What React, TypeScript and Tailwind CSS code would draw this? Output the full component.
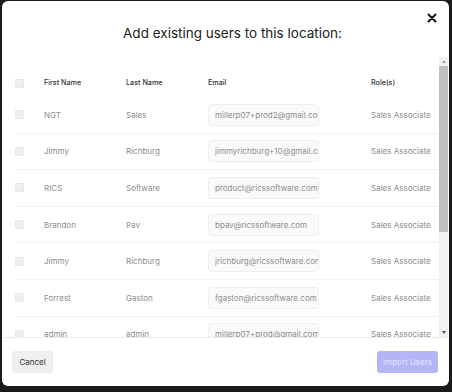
const users = [
  { first: "NGT", last: "Sales", email: "millerp07+prod2@gmail.com" },
  { first: "Jimmy", last: "Richburg", email: "jimmyrichburg+10@gmail.com" },
  { first: "RICS", last: "Software", email: "product@ricssoftware.com" },
  { first: "Brandon", last: "Pav", email: "bpav@ricssoftware.com" },
  { first: "Jimmy", last: "Richburg", email: "jrichburg@ricssoftware.com" },
  { first: "Forrest", last: "Gaston", email: "fgaston@ricssoftware.com" },
  { first: "admin", last: "admin", email: "millerp07+prod@gmail.com" },
];

function Checkbox() {
  return <div className="w-[9px] h-[9px] rounded-[1px] bg-[#efefef] border border-[#e8e8e8]" />;
}

export default function App() {
  return (
    <div className="w-[452px] h-[392px] bg-[#1b1b1b] pt-[1px] pl-[2px] font-['Inter',sans-serif]">
      <div className="relative w-[447px] h-[385px] bg-white rounded-[6px] flex flex-col overflow-hidden">
        <button className="absolute right-[12px] top-[12px] w-[10px] h-[10px] text-[#111]">
          <svg viewBox="0 0 10 10" className="w-[10px] h-[10px]">
            <path d="M1.5 1.5 L8.5 8.5 M8.5 1.5 L1.5 8.5" stroke="currentColor" strokeWidth="2" strokeLinecap="round" />
          </svg>
        </button>

        <div className="h-[56px] flex items-start justify-center pt-[22px] pl-[14px]">
          <h1 className="text-[13.5px] leading-[20px] text-[#222]">Add existing users to this location:</h1>
        </div>

        <div className="flex h-[280px]">
          <div className="flex-1 overflow-hidden pl-[13px]">
            <div className="h-[40px] pt-[12px] flex items-center text-[7.2px] font-medium text-[#333]">
              <div className="w-[29px] flex"><Checkbox /></div>
              <div className="w-[82px]">First Name</div>
              <div className="w-[82px]">Last Name</div>
              <div className="w-[163px]">Email</div>
              <div>Role(s)</div>
            </div>
            {users.map((u, i) => (
              <div key={i} className="h-[36.6px] flex items-center border-b border-[#f3f3f3] text-[8px] text-[#8d8d8d] shrink-0">
                <div className="w-[29px] flex"><Checkbox /></div>
                <div className="w-[82px]">{u.first}</div>
                <div className="w-[82px]">{u.last}</div>
                <div className="w-[163px]">
                  <div className="w-[111px] h-[22px] rounded-[3px] bg-[#fafafa] border border-[#efefef] px-[6px] flex items-center overflow-hidden whitespace-nowrap">
                    {u.email}
                  </div>
                </div>
                <div className="whitespace-nowrap">Sales Associate</div>
              </div>
            ))}
          </div>

          <div className="w-[9px] mr-[1px] bg-[#f1f1f1] flex flex-col">
            <div className="h-[9px] flex items-center justify-center">
              <div className="w-0 h-0 border-l-[2.5px] border-r-[2.5px] border-b-[3px] border-l-transparent border-r-transparent border-b-[#a3a3a3]" />
            </div>
            <div className="h-[166px] bg-[#c1c1c1]" />
            <div className="flex-1" />
            <div className="h-[9px] flex items-center justify-center">
              <div className="w-0 h-0 border-l-[2.5px] border-r-[2.5px] border-t-[3px] border-l-transparent border-r-transparent border-t-[#505050]" />
            </div>
          </div>
        </div>

        <div className="flex-1 border-t border-[#ececec] flex items-center justify-between pl-[10px] pr-[11px]">
          <button className="w-[41px] h-[22px] rounded-[3px] bg-[#efefef] text-[8px] text-[#333]">Cancel</button>
          <button className="w-[61px] h-[22px] rounded-[3px] bg-[#b4b5f7] text-[8px] text-[#e4e4fc]">Import Users</button>
        </div>
      </div>
    </div>
  );
}
